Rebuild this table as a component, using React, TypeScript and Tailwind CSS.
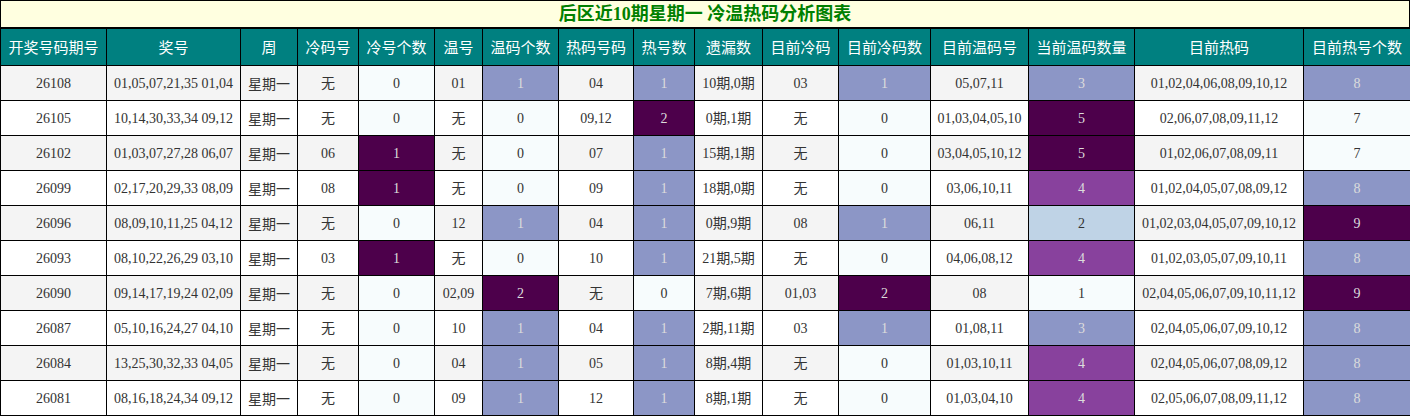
import React from "react";

type Row = [string, string, string, number, string, number, string, number, string, string, number, string, number, string, number];

const rows: Row[] = [
  ["26108", "01,05,07,21,35 01,04", "无", 0, "01", 1, "04", 1, "10期,0期", "03", 1, "05,07,11", 3, "01,02,04,06,08,09,10,12", 8],
  ["26105", "10,14,30,33,34 09,12", "无", 0, "无", 0, "09,12", 2, "0期,1期", "无", 0, "01,03,04,05,10", 5, "02,06,07,08,09,11,12", 7],
  ["26102", "01,03,07,27,28 06,07", "06", 1, "无", 0, "07", 1, "15期,1期", "无", 0, "03,04,05,10,12", 5, "01,02,06,07,08,09,11", 7],
  ["26099", "02,17,20,29,33 08,09", "08", 1, "无", 0, "09", 1, "18期,0期", "无", 0, "03,06,10,11", 4, "01,02,04,05,07,08,09,12", 8],
  ["26096", "08,09,10,11,25 04,12", "无", 0, "12", 1, "04", 1, "0期,9期", "08", 1, "06,11", 2, "01,02,03,04,05,07,09,10,12", 9],
  ["26093", "08,10,22,26,29 03,10", "03", 1, "无", 0, "10", 1, "21期,5期", "无", 0, "04,06,08,12", 4, "01,02,03,05,07,09,10,11", 8],
  ["26090", "09,14,17,19,24 02,09", "无", 0, "02,09", 2, "无", 0, "7期,6期", "01,03", 2, "08", 1, "02,04,05,06,07,09,10,11,12", 9],
  ["26087", "05,10,16,24,27 04,10", "无", 0, "10", 1, "04", 1, "2期,11期", "03", 1, "01,08,11", 3, "02,04,05,06,07,09,10,12", 8],
  ["26084", "13,25,30,32,33 04,05", "无", 0, "04", 1, "05", 1, "8期,4期", "无", 0, "01,03,10,11", 4, "02,04,05,06,07,08,09,12", 8],
  ["26081", "08,16,18,24,34 09,12", "无", 0, "09", 1, "12", 1, "8期,1期", "无", 0, "01,03,04,10", 4, "02,05,06,07,08,09,11,12", 8],
];

const headers = ["开奖号码期号", "奖号", "周", "冷码号", "冷号个数", "温号", "温码个数", "热码号码", "热号数", "遗漏数", "目前冷码", "目前冷码数", "目前温码号", "当前温码数量", "目前热码", "目前热号个数"];
const widths = [106, 134, 57, 61, 76, 48, 76, 75, 61, 68, 76, 92, 98, 106, 169, 107];

const lo = "bg-[#f7fcfd] text-[#333]";
const mid = "bg-[#8c96c6] text-[#dcdcdc]";
const hi = "bg-[#4d004b] text-[#dcdcdc]";

const scale3: Record<number, string> = { 0: lo, 1: mid, 2: hi };
const coldScale: Record<number, string> = { 0: lo, 1: hi };
const warmNow: Record<number, string> = { 1: lo, 2: "bg-[#bfd3e6] text-[#333]", 3: mid, 4: "bg-[#88419d] text-[#dcdcdc]", 5: hi };
const hotNow: Record<number, string> = { 7: lo, 8: mid, 9: hi };

const td = "border border-black text-center p-0 h-[35px]";

export default function App() {
  return (
    <div className="w-[1410px] font-['Liberation_Serif','Noto_Sans_CJK_SC',serif] text-[14px] text-[#333]">
      <div className="h-[28px] border border-black bg-[#ffffe0] flex items-center justify-center text-[18px] font-bold text-[#008000]">
        后区近10期星期一 冷温热码分析图表
      </div>
      <table className="w-[1410px] table-fixed border-collapse">
        <colgroup>
          {widths.map((w, i) => (
            <col key={i} style={{ width: w }} />
          ))}
        </colgroup>
        <thead>
          <tr className="bg-[#008080] text-white font-['Noto_Sans_CJK_SC',sans-serif] text-[15px]">
            {headers.map((h) => (
              <th key={h} className="border border-black font-normal h-[37px] p-0 text-center whitespace-nowrap">
                {h}
              </th>
            ))}
          </tr>
        </thead>
        <tbody>
          {rows.map((r, i) => (
            <tr key={r[0]} className={i % 2 === 0 ? "bg-[#f4f4f4]" : "bg-white"}>
              <td className={td}>{r[0]}</td>
              <td className={`${td} whitespace-nowrap`}>{r[1]}</td>
              <td className={`${td} font-['Noto_Sans_CJK_SC',sans-serif]`}>星期一</td>
              <td className={td}>{r[2]}</td>
              <td className={`${td} ${coldScale[r[3]]}`}>{r[3]}</td>
              <td className={td}>{r[4]}</td>
              <td className={`${td} ${scale3[r[5]]}`}>{r[5]}</td>
              <td className={td}>{r[6]}</td>
              <td className={`${td} ${scale3[r[7]]}`}>{r[7]}</td>
              <td className={`${td} whitespace-nowrap`}>{r[8]}</td>
              <td className={td}>{r[9]}</td>
              <td className={`${td} ${scale3[r[10]]}`}>{r[10]}</td>
              <td className={`${td} whitespace-nowrap`}>{r[11]}</td>
              <td className={`${td} ${warmNow[r[12]]}`}>{r[12]}</td>
              <td className={`${td} whitespace-nowrap`}>{r[13]}</td>
              <td className={`${td} ${hotNow[r[14]]}`}>{r[14]}</td>
            </tr>
          ))}
        </tbody>
      </table>
    </div>
  );
}
